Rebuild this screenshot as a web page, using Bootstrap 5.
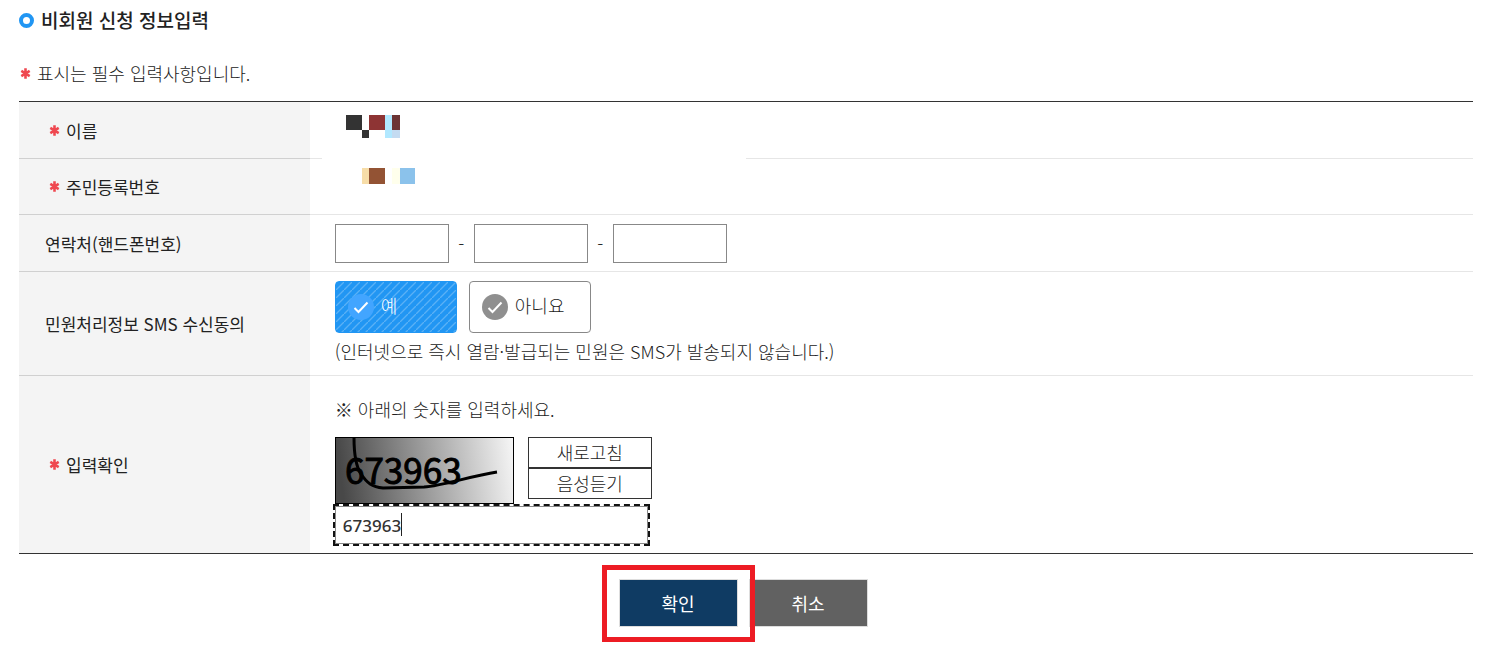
<!DOCTYPE html>
<html lang="ko">
<head>
<meta charset="utf-8">
<meta name="viewport" content="width=device-width, initial-scale=1">
<title>비회원 신청 정보입력</title>
<link href="https://cdn.jsdelivr.net/npm/bootstrap@5.3.0/dist/css/bootstrap.min.css" rel="stylesheet">
<style>
body { font-family: "Noto Sans CJK KR", "Noto Sans", sans-serif; font-size: 18px; font-weight: 300; line-height: 27px; color: #222; background: #fff; }
.page { padding: 5px 35px 26px 19px; }
.page-title { font-size: 19px; font-weight: 500; line-height: 30px; gap: 7px; margin-bottom: 25px; }
.ring { width: 15px; height: 15px; border: 4px solid #2196f3; border-radius: 50%; }
.required-note { gap: 6px; margin-bottom: 14px; padding-left: 1px; }
.star { width: 11px; height: 11px; flex: none; }
.form-grid { width: 100%; border-collapse: separate; border-spacing: 0; border-top: 1px solid #333; border-bottom: 1px solid #333; }
.form-grid th { width: 20%; background: #f4f4f4; border-bottom: 1px solid #d0d0d0; padding: 0 26px; font-size: 17px; font-weight: 400; }
.form-grid td { border-bottom: 1px solid #e6e6e6; padding: 9px 25px 8px; position: relative; }
.form-grid tr:last-child > * { border-bottom: 0; }
.form-grid tr.plain { height: 57px; }
.form-grid tr.plain-short { height: 56px; }
.th-required { gap: 6px; padding-left: 4px; }
.redaction { position: absolute; left: 12px; top: 3px; z-index: 1; }
.tel-part { width: 114px; height: 39px; border: 1px solid #888; border-radius: 0; }
.tel-dash { width: 25px; text-align: center; }
.choices { gap: 12px; }
.choice { width: 122px; height: 52px; border: 1px solid #888; border-radius: 4px; padding: 0 12px 4px; gap: 7px; cursor: pointer; }
.choice svg { margin-top: 4px; }
.choice .disc { fill: #8f8f8f; }
.btn-check:checked + .choice { color: #fff; border-color: #2196f3; background: linear-gradient(135deg, #2196f3 42%, #5ab1f6 46% 54%, #2196f3 58%) 0 0 / 8px 8px; }
.btn-check:checked + .choice .disc { fill: #42a5ff; }
.sms-note { margin: 5px 0 0; }
.form-grid .sms-cell { padding-bottom: 10px; }
.form-grid .captcha-cell { padding-top: 20px; padding-bottom: 9px; }
.captcha-note { margin-bottom: 14px; }
.captcha-row { gap: 14px; }
.captcha-image { border: 1px solid #000; width: 179px; height: 67px; }
.captcha-image text { font-family: "Noto Sans CJK KR", sans-serif; font-size: 35px; font-weight: 400; }
.tool-btn { width: 124px; height: 31px; border: 1px solid #333; background: #fff; color: #222; padding: 0; font-weight: 300; line-height: 27px; }
.answer-box { width: 313px; margin-top: 2px; }
.answer-box input { width: 100%; height: 38px; border: 1px solid #888; outline: 2px dashed #111; padding: 0 7px; font-family: "Noto Sans", sans-serif; font-size: 17px; font-weight: 500; color: #333; display: block; }
.caret { position: absolute; left: 66px; top: 7px; width: 1px; height: 23px; background: #222; }
.actions { margin-top: 25px; gap: 11px; padding-right: 6px; }
.action-btn { width: 119px; height: 48px; border: 1px solid #ddd; border-radius: 0; color: #fff; font-weight: 400; font-size: 18px; padding: 0; }
.action-btn.confirm { background: #0f3b63; }
.action-btn.cancel { background: #616161; }
.callout-frame { position: absolute; inset: -14px -17px -15px; border: 5px solid #ed1c24; z-index: 2; pointer-events: none; }
</style>
</head>
<body>
<svg class="d-none" aria-hidden="true">
  <symbol id="star" viewBox="0 0 11 11"><path d="M5.500 .3v10.400M1.300 2.900l8.400 5.200M9.700 2.900l-8.400 5.200" stroke="#ef4850" stroke-width="2.600"/></symbol>
  <symbol id="check" viewBox="0 0 26 26"><path d="M6.500 14l4 4 9-9.500" fill="none" stroke="#fff" stroke-width="2"/></symbol>
</svg>
<main class="page">
  <h1 class="page-title d-flex align-items-center"><span class="ring"></span>비회원 신청 정보입력</h1>
  <p class="required-note d-flex align-items-center"><svg class="star" aria-hidden="true"><use href="#star"/></svg>표시는 필수 입력사항입니다.</p>
  <form>
    <table class="form-grid">
      <tbody>
        <tr class="plain">
          <th scope="row"><div class="th-required d-flex align-items-center"><svg class="star" aria-hidden="true"><use href="#star"/></svg>이름</div></th>
          <td>
            <svg class="redaction" width="424" height="94" aria-hidden="true" shape-rendering="crispEdges">
              <rect width="424" height="94" fill="#fff"/>
              <rect x="24" y="10" width="16" height="15" fill="#333"/>
              <rect x="40" y="25" width="7" height="8" fill="#333"/>
              <rect x="47" y="10" width="16" height="15" fill="#8e3434"/>
              <rect x="63" y="10" width="7" height="23" fill="#b1e8ff"/>
              <rect x="70" y="10" width="8" height="15" fill="#6c3434"/>
              <rect x="70" y="25" width="8" height="8" fill="#c4dbf1"/>
              <rect x="40" y="63" width="7" height="16" fill="#f7dda8"/>
              <rect x="47" y="63" width="16" height="16" fill="#935334"/>
              <rect x="70" y="63" width="8" height="16" fill="#ffffec"/>
              <rect x="78" y="63" width="15" height="16" fill="#8bc2eb"/>
            </svg>
          </td>
        </tr>
        <tr class="plain-short">
          <th scope="row"><div class="th-required d-flex align-items-center"><svg class="star" aria-hidden="true"><use href="#star"/></svg>주민등록번호</div></th>
          <td></td>
        </tr>
        <tr>
          <th scope="row"><label for="tel1">연락처(핸드폰번호)</label></th>
          <td>
            <div class="d-flex align-items-center">
              <input class="tel-part" id="tel1" type="tel">
              <span class="tel-dash">-</span>
              <input class="tel-part" type="tel" aria-label="가운데 번호">
              <span class="tel-dash">-</span>
              <input class="tel-part" type="tel" aria-label="끝 번호">
            </div>
          </td>
        </tr>
        <tr>
          <th scope="row">민원처리정보 SMS 수신동의</th>
          <td class="sms-cell">
            <div class="choices d-flex">
              <input class="btn-check" type="radio" name="sms" id="smsYes" checked>
              <label class="choice d-flex align-items-center" for="smsYes"><svg width="26" height="26" aria-hidden="true"><circle class="disc" cx="13" cy="13" r="13"/><use href="#check"/></svg>예</label>
              <input class="btn-check" type="radio" name="sms" id="smsNo">
              <label class="choice d-flex align-items-center" for="smsNo"><svg width="26" height="26" aria-hidden="true"><circle class="disc" cx="13" cy="13" r="13"/><use href="#check"/></svg>아니요</label>
            </div>
            <p class="sms-note">(인터넷으로 즉시 열람·발급되는 민원은 SMS가 발송되지 않습니다.)</p>
          </td>
        </tr>
        <tr>
          <th scope="row"><label class="th-required d-flex align-items-center" for="answer"><svg class="star" aria-hidden="true"><use href="#star"/></svg>입력확인</label></th>
          <td class="captcha-cell">
            <p class="captcha-note">※ 아래의 숫자를 입력하세요.</p>
            <div class="captcha-row d-flex">
              <svg class="captcha-image" viewBox="0 0 177 65">
                <defs><linearGradient id="shade" x1="0" y1=".05" x2="1" y2="0"><stop offset="0" stop-color="#484848"/><stop offset="1" stop-color="#f6f6f6"/></linearGradient></defs>
                <rect width="177" height="65" fill="url(#shade)"/>
                <text x="9" y="46" stroke="#000">673963</text>
                <path d="M18 0C18 14 19 27 25 36C31 45 36 49 47 50L88 49C107 48 134 38 161 34" fill="none" stroke="#000" stroke-width="3"/>
              </svg>
              <div class="d-flex flex-column">
                <button class="tool-btn" type="button">새로고침</button>
                <button class="tool-btn" type="button">음성듣기</button>
              </div>
            </div>
            <div class="answer-box position-relative">
              <input id="answer" type="text" value="673963">
              <span class="caret"></span>
            </div>
          </td>
        </tr>
      </tbody>
    </table>
    <div class="actions d-flex justify-content-center">
      <div class="position-relative">
        <button class="btn action-btn confirm d-block" type="submit">확인</button>
        <span class="callout-frame"></span>
      </div>
      <button class="btn action-btn cancel" type="button">취소</button>
    </div>
  </form>
</main>
<script src="https://cdn.jsdelivr.net/npm/bootstrap@5.3.0/dist/js/bootstrap.bundle.min.js"></script>
</body>
</html>
